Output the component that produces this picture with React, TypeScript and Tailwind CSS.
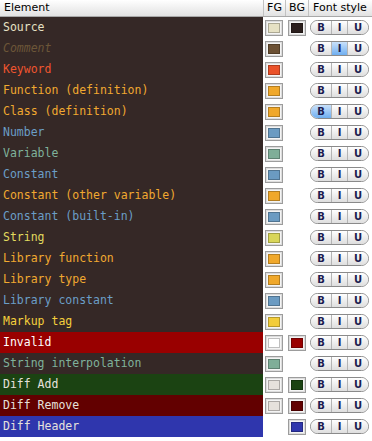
type Row = {
  name: string;
  text: string;
  bg?: string;
  fg?: string;
  bgSwatch?: string;
  italic?: boolean;
  active?: 'B' | 'I' | 'U';
};

const rows: Row[] = [
  { name: 'Source', text: 'text-[#e6e1c4]', fg: 'bg-[#e6e1c4]', bgSwatch: 'bg-[#2b1f1d]' },
  { name: 'Comment', text: 'text-[#6c5638]', fg: 'bg-[#6b5033]', italic: true, active: 'I' },
  { name: 'Keyword', text: 'text-[#f0552f]', fg: 'bg-[#ea5129]' },
  { name: 'Function (definition)', text: 'text-[#f1a930]', fg: 'bg-[#f0a82b]' },
  { name: 'Class (definition)', text: 'text-[#f1a930]', fg: 'bg-[#f0a82b]', active: 'B' },
  { name: 'Number', text: 'text-[#6b9ec6]', fg: 'bg-[#6b9bc2]' },
  { name: 'Variable', text: 'text-[#7fb29b]', fg: 'bg-[#7fae98]' },
  { name: 'Constant', text: 'text-[#6b9ec6]', fg: 'bg-[#6b9bc2]' },
  { name: 'Constant (other variable)', text: 'text-[#f1a930]', fg: 'bg-[#f0a82b]' },
  { name: 'Constant (built-in)', text: 'text-[#6b9ec6]', fg: 'bg-[#6b9bc2]' },
  { name: 'String', text: 'text-[#e2da5e]', fg: 'bg-[#d9d659]' },
  { name: 'Library function', text: 'text-[#f1a930]', fg: 'bg-[#f0a82b]' },
  { name: 'Library type', text: 'text-[#f1a930]', fg: 'bg-[#f0a82b]' },
  { name: 'Library constant', text: 'text-[#6b9ec6]', fg: 'bg-[#6b9bc2]' },
  { name: 'Markup tag', text: 'text-[#f5d03c]', fg: 'bg-[#f2cc3a]' },
  { name: 'Invalid', text: 'text-white', bg: 'bg-[#990000]', fg: 'bg-white', bgSwatch: 'bg-[#990000]' },
  { name: 'String interpolation', text: 'text-[#7fb29b]', fg: 'bg-[#7fae98]' },
  { name: 'Diff Add', text: 'text-[#e6e1dc]', bg: 'bg-[#1b4312]', fg: 'bg-[#e6e1dc]', bgSwatch: 'bg-[#1b4312]' },
  { name: 'Diff Remove', text: 'text-[#e6e1dc]', bg: 'bg-[#620000]', fg: 'bg-[#e6e1dc]', bgSwatch: 'bg-[#620000]' },
  { name: 'Diff Header', text: 'text-[#e6e1dc]', bg: 'bg-[#2f36ad]', bgSwatch: 'bg-[#2f36ad]' },
];

function Swatch({ color }: { color: string }) {
  return (
    <div className="w-[18px] h-[16px] border border-[#9c9c9c] bg-[#f4f4f4] p-[2px] shadow-[inset_0_0_0_1px_#dcdcdc]">
      <div className={`w-full h-full border border-black/25 ${color}`}></div>
    </div>
  );
}

function StyleToggle({ active }: { active?: 'B' | 'I' | 'U' }) {
  const seg = (label: 'B' | 'I' | 'U', width: string, extra: string) => (
    <div
      className={`${width} h-full flex items-center justify-center text-[10px] font-bold text-[#1c1c50] ${extra} ${
        active === label
          ? 'bg-gradient-to-b from-[#c9e1fa] to-[#6eaef0]'
          : 'bg-gradient-to-b from-white to-[#dedede]'
      }`}
    >
      {label}
    </div>
  );
  return (
    <div
      className="ml-[1px] w-[59px] h-[15px] flex rounded-full border border-[#8a8a8a] overflow-hidden"
      style={{ fontFamily: '"DejaVu Sans", sans-serif' }}
    >
      {seg('B', 'w-[21px]', 'border-r border-[#b4b4b4]')}
      {seg('I', 'w-[16px]', 'border-r border-[#b4b4b4]')}
      {seg('U', 'flex-1', '')}
    </div>
  );
}

export default function App() {
  return (
    <div className="w-[372px] h-[441px] bg-white overflow-hidden">
      <div
        className="grid grid-cols-[264px_22px_23px_1fr] h-[17px] bg-gradient-to-b from-white to-[#e2e2e2] border-b border-[#a8a8a8] text-[11px] text-black"
        style={{ fontFamily: '"DejaVu Sans", sans-serif' }}
      >
        <div className="border-r border-[#c2c2c2] pl-[4px] leading-[16px]">Element</div>
        <div className="border-r border-[#c2c2c2] text-center leading-[16px]">FG</div>
        <div className="border-r border-[#c2c2c2] text-center leading-[16px]">BG</div>
        <div className="pl-[4px] leading-[16px]">Font style</div>
      </div>
      {rows.map((r) => (
        <div key={r.name} className="grid grid-cols-[263px_23px_23px_1fr] h-[21px]">
          <div
            className={`${r.bg ?? 'bg-[#352826]'} ${r.text} ${r.italic ? 'italic' : ''} pl-[3px] text-[11.5px] leading-[21px] whitespace-nowrap`}
            style={{ fontFamily: '"DejaVu Sans Mono", monospace' }}
          >
            {r.name}
          </div>
          <div className="flex items-center pl-[2px]">{r.fg && <Swatch color={r.fg} />}</div>
          <div className="flex items-center pl-[2px]">{r.bgSwatch && <Swatch color={r.bgSwatch} />}</div>
          <div className="flex items-center">
            <StyleToggle active={r.active} />
          </div>
        </div>
      ))}
    </div>
  );
}
